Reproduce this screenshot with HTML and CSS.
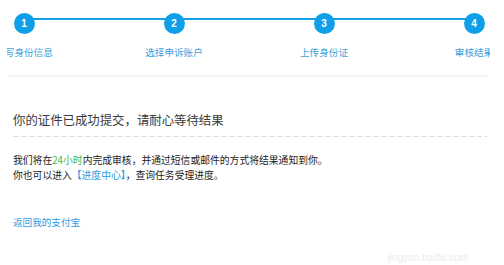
FILE: index.html
```html
<!DOCTYPE html>
<html lang="zh-CN">
<head>
    <meta charset="UTF-8">
    <meta name="viewport" content="width=device-width, initial-scale=1.0">
    <title>提交成功</title>
    <link rel="stylesheet" href="styles.css">
</head>
<body>

    <div class="steps-wrap">
        <div class="steps">
            <div class="step">
                <span class="num">1</span>
                <p class="label">填写身份信息</p>
            </div>
            <div class="step">
                <span class="num">2</span>
                <p class="label">选择申诉账户</p>
            </div>
            <div class="step">
                <span class="num">3</span>
                <p class="label">上传身份证</p>
            </div>
            <div class="step last">
                <span class="num">4</span>
                <p class="label">审核结果</p>
            </div>
        </div>
    </div>

    <div class="content">
        <h2 class="title">你的证件已成功提交，请耐心等待结果</h2>
        <div class="dash"></div>
        <p class="info">
            我们将在<span class="green">24小时</span>内完成审核，并通过短信或邮件的方式将结果通知到你。<br>
            你也可以进入<a class="link" href="#">【进度中心】</a>，查询任务受理进度。
        </p>
        <a class="link back" href="#">返回我的支付宝</a>
    </div>

    <div class="watermark">jingyan.baidu.com</div>

</body>
</html>
```

FILE: styles.css
```css
body {
    font-family: "Noto Sans CJK SC", "Liberation Sans", sans-serif;
    background-color: #fff;
    color: #333;
    margin: 0;
    overflow: hidden;
    position: relative;
    height: 265px;
}
.steps-wrap {
    margin-left: 7px;
    width: 483px;
    overflow: hidden;
}
.steps {
    display: flex;
    margin-left: -58px;
    padding-top: 8px;
}
.step {
    position: relative;
    width: 150px;
    flex: none;
    text-align: center;
}
.step::after {
    content: "";
    position: absolute;
    left: 75px;
    top: 10px;
    width: 150px;
    height: 2px;
    background: #16a2e6;
}
.step.last::after {
    display: none;
}
.num {
    position: relative;
    z-index: 1;
    display: inline-block;
    width: 21px;
    height: 21px;
    line-height: 21px;
    border-radius: 50%;
    background: #0f9fe8;
    color: #fff;
    font-family: "Liberation Sans", sans-serif;
    font-size: 10px;
    font-weight: bold;
}
.label {
    margin: 11px 0 0;
    font-size: 9.6px;
    line-height: 14px;
    color: #3d9fdc;
    white-space: nowrap;
}
.content {
    margin: 16px 8px 0;
    width: 480px;
    border-top: 2px solid #f3f3f3;
}
.title {
    margin: 34px 0 0 5px;
    font-size: 12.4px;
    font-weight: normal;
    line-height: 18px;
    color: #3a3a3a;
}
.dash {
    height: 1px;
    margin: 7px 1px 0 5px;
    background: repeating-linear-gradient(90deg, #dcdcdc 0 5px, transparent 5px 8px);
}
.info {
    margin: 16px 0 0 5px;
    font-size: 9.8px;
    line-height: 15px;
    color: #222;
}
.green {
    color: #47b847;
}
.link {
    color: #2a9be0;
    text-decoration: none;
}
.back {
    display: inline-block;
    margin: 32px 0 0 5px;
    font-size: 9.6px;
    line-height: 15px;
}
.watermark {
    position: absolute;
    right: 36px;
    bottom: 2px;
    font-family: "Liberation Sans", sans-serif;
    font-size: 10px;
    color: #ececec;
}
```
